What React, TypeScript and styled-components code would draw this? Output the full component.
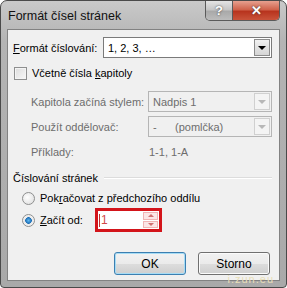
import styled, { createGlobalStyle } from "styled-components";

const Global = createGlobalStyle`
  html, body {
    margin: 0;
    padding: 0;
    background: #ffffff;
  }
  body {
    font-family: "Liberation Sans", Arial, sans-serif;
    font-size: 11px;
    color: #000;
  }
`;

const Frame = styled.div`
  width: 287px;
  height: 288px;
  box-sizing: border-box;
  background: linear-gradient(#c9c9c9, #b4b4b4 40px, #a9a9a9);
  border: 1px solid #4a4a4a;
  border-radius: 7px 7px 4px 4px;
  padding: 0 6px 6px 6px;
  display: flex;
  flex-direction: column;
  position: relative;
  overflow: hidden;
`;

const TitleBar = styled.div`
  height: 28px;
  display: flex;
  align-items: flex-start;
  justify-content: space-between;
`;

const Title = styled.div`
  font-family: "Liberation Sans", Arial, sans-serif;
  font-size: 12.5px;
  margin-top: 8px;
  padding-left: 1px;
  color: #111;
`;

const Caption = styled.div`
  display: flex;
  border: 1px solid #5a5a5a;
  border-top: none;
  border-radius: 0 0 5px 5px;
  overflow: hidden;
  height: 19px;
`;

const CapBtn = styled.div<{ $close?: boolean }>`
  width: ${(p) => (p.$close ? 46 : 26)}px;
  display: flex;
  align-items: center;
  justify-content: center;
  color: #fff;
  font-weight: bold;
  font-size: 13px;
  text-shadow: 0 0 2px #333;
  background: ${(p) =>
    p.$close
      ? "linear-gradient(#e6a08f, #d0634c 45%, #b8341e 55%, #c9533a)"
      : "linear-gradient(#e4e4e4, #c6c6c6 45%, #a9a9a9 55%, #bcbcbc)"};
  border-left: ${(p) => (p.$close ? "1px solid #5a5a5a" : "none")};
`;

const Content = styled.div`
  flex: 1;
  background: #f0f0f0;
  border: 1px solid #828282;
  padding: 7px 7px 0 5px;
  display: flex;
  flex-direction: column;
`;

const Row = styled.div<{ $h: number; $mt?: number; $indent?: number }>`
  height: ${(p) => p.$h}px;
  margin-top: ${(p) => p.$mt ?? 0}px;
  padding-left: ${(p) => p.$indent ?? 0}px;
  display: flex;
  align-items: center;
`;

const Label = styled.span<{ $w?: number; $disabled?: boolean }>`
  width: ${(p) => (p.$w ? `${p.$w}px` : "auto")};
  flex: none;
  color: ${(p) => (p.$disabled ? "#6d6d6d" : "#000")};
  white-space: nowrap;
`;

const Combo = styled.div<{ $w: number; $disabled?: boolean }>`
  width: ${(p) => p.$w}px;
  height: 21px;
  box-sizing: border-box;
  border: 1px solid ${(p) => (p.$disabled ? "#b5b5b5" : "#7a7a7a")};
  background: ${(p) => (p.$disabled ? "#f0f0f0" : "#fff")};
  display: flex;
  align-items: center;
  color: ${(p) => (p.$disabled ? "#6d6d6d" : "#000")};
`;

const ComboText = styled.span`
  flex: 1;
  padding-left: 4px;
  white-space: pre;
`;

const DropBtn = styled.div<{ $disabled?: boolean }>`
  width: 16px;
  height: 17px;
  margin-right: 1px;
  box-sizing: border-box;
  border: 1px solid ${(p) => (p.$disabled ? "#d0d0d0" : "#8c8c8c")};
  background: ${(p) =>
    p.$disabled ? "#f4f4f4" : "linear-gradient(#f2f2f2, #e2e2e2 50%, #d6d6d6)"};
  display: flex;
  align-items: center;
  justify-content: center;
  &::after {
    content: "";
    border-left: 4px solid transparent;
    border-right: 4px solid transparent;
    border-top: 4px solid ${(p) => (p.$disabled ? "#b8b8b8" : "#000")};
  }
`;

const Check = styled.span`
  width: 13px;
  height: 13px;
  box-sizing: border-box;
  border: 1px solid #8e8f8f;
  background: linear-gradient(135deg, #dcdcdc, #f8f8f8);
  box-shadow: inset 0 0 0 1px #f4f4f4;
  margin-right: 5px;
  margin-left: 1px;
`;

const Radio = styled.span<{ $on?: boolean }>`
  width: 13px;
  height: 13px;
  box-sizing: border-box;
  border-radius: 50%;
  border: 1px solid #8e8f8f;
  background: ${(p) =>
    p.$on
      ? "radial-gradient(circle, #5fb8ef 0, #1d6fb8 3px, #e8e8e8 3.6px, #f6f6f6 6px)"
      : "radial-gradient(circle at 40% 40%, #ffffff, #dadada)"};
  margin-left: 9px;
  margin-right: 5px;
`;

const U = styled.span`
  text-decoration: underline;
`;

const GroupLine = styled.div`
  flex: 1;
  height: 1px;
  background: #dcdcdc;
  border-bottom: 1px solid #fff;
  margin-left: 6px;
`;

const Highlight = styled.div`
  margin-left: 8px;
  width: 67px;
  height: 24px;
  box-sizing: border-box;
  border: 3px solid #d3141a;
  display: flex;
  align-items: stretch;
`;

const SpinInput = styled.div`
  flex: 1;
  background: #fff;
  display: flex;
  align-items: center;
  padding-left: 1px;
  color: #d04848;
  font-size: 12px;
`;

const Caret = styled.span`
  width: 1px;
  height: 13px;
  background: #c03030;
  margin-right: 1px;
`;

const Spin = styled.div`
  width: 15px;
  background: #fff;
  display: flex;
  flex-direction: column;
  gap: 1px;
  padding: 1px 1px 1px 0;
`;

const SpinBtn = styled.div<{ $up?: boolean }>`
  flex: 1;
  border: 1px solid #f0b4b4;
  background: #fbe6e6;
  display: flex;
  align-items: center;
  justify-content: center;
  &::after {
    content: "";
    border-left: 3px solid transparent;
    border-right: 3px solid transparent;
    ${(p) =>
      p.$up ? "border-bottom: 3px solid #d07070;" : "border-top: 3px solid #d07070;"}
  }
`;

const Buttons = styled.div`
  margin-top: 20px;
  display: flex;
  justify-content: flex-end;
  gap: 12px;
  padding-right: 2px;
`;

const Button = styled.div<{ $focus?: boolean }>`
  width: 72px;
  height: 23px;
  box-sizing: border-box;
  border: 1px solid ${(p) => (p.$focus ? "#3c7fb1" : "#707070")};
  border-radius: 3px;
  background: linear-gradient(#f2f2f2, #ebebeb 50%, #dddddd 51%, #cfcfcf);
  box-shadow: ${(p) => (p.$focus ? "inset 0 0 0 1px #a6dcf5" : "inset 0 0 0 1px #fbfbfb")};
  display: flex;
  align-items: center;
  justify-content: center;
  font-size: 12px;
`;

const Watermark = styled.div`
  position: absolute;
  right: 12px;
  bottom: 2px;
  font-size: 11px;
  color: #e9dfb8;
  letter-spacing: 1px;
`;

export default function App() {
  return (
    <>
      <Global />
      <Frame>
        <TitleBar>
          <Title>Formát čísel stránek</Title>
          <Caption>
            <CapBtn>?</CapBtn>
            <CapBtn $close>✕</CapBtn>
          </Caption>
        </TitleBar>
        <Content>
          <Row $h={21}>
            <Label $w={90}>
              <U>F</U>ormát číslování:
            </Label>
            <Combo $w={170}>
              <ComboText>1, 2, 3, …</ComboText>
              <DropBtn />
            </Combo>
          </Row>
          <Row $h={18} $mt={6}>
            <Check />
            <Label>
              Včetně čísla <U>k</U>apitoly
            </Label>
          </Row>
          <Row $h={21} $mt={9} $indent={18}>
            <Label $w={117} $disabled>
              Kapitola začíná stylem:
            </Label>
            <Combo $w={125} $disabled>
              <ComboText>Nadpis 1</ComboText>
              <DropBtn $disabled />
            </Combo>
          </Row>
          <Row $h={21} $mt={4} $indent={18}>
            <Label $w={117} $disabled>
              Použít oddělovač:
            </Label>
            <Combo $w={125} $disabled>
              <ComboText>{"-      (pomlčka)"}</ComboText>
              <DropBtn $disabled />
            </Combo>
          </Row>
          <Row $h={18} $mt={6} $indent={18}>
            <Label $w={118} $disabled>
              Příklady:
            </Label>
            <Label $disabled>1-1, 1-A</Label>
          </Row>
          <Row $h={18} $mt={8}>
            <Label>Číslování stránek</Label>
            <GroupLine />
          </Row>
          <Row $h={18} $mt={2}>
            <Radio />
            <Label>
              Pok<U>r</U>ačovat z předchozího oddílu
            </Label>
          </Row>
          <Row $h={24} $mt={1}>
            <Radio $on />
            <Label $w={47}>
              <U>Z</U>ačít od:
            </Label>
            <Highlight>
              <SpinInput>
                <Caret />1
              </SpinInput>
              <Spin>
                <SpinBtn $up />
                <SpinBtn />
              </Spin>
            </Highlight>
          </Row>
          <Buttons>
            <Button $focus>OK</Button>
            <Button>Storno</Button>
          </Buttons>
        </Content>
        <Watermark>i.zun.eu</Watermark>
      </Frame>
    </>
  );
}
